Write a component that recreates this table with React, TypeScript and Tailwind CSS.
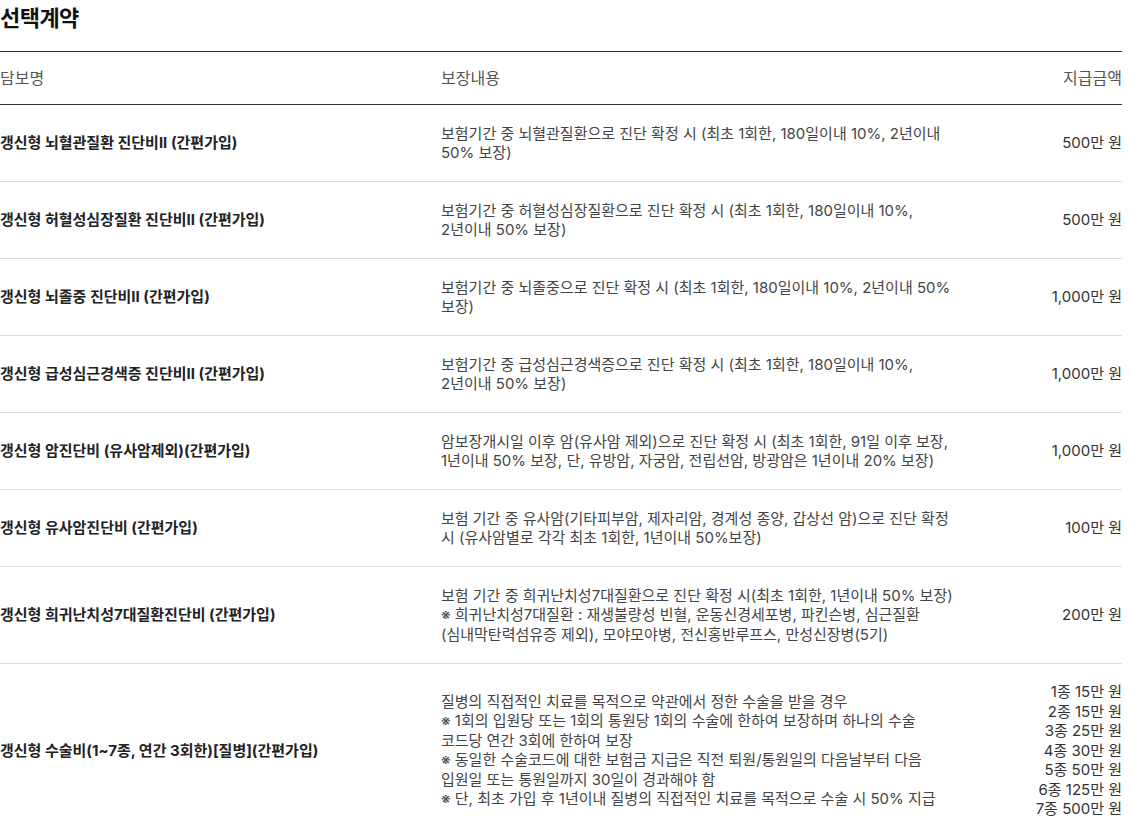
import React from 'react';

type Row = {
  name: string;
  desc: string[];
  amount: string[];
};

const rows: Row[] = [
  {
    name: '갱신형 뇌혈관질환 진단비II (간편가입)',
    desc: ['보험기간 중 뇌혈관질환으로 진단 확정 시 (최초 1회한, 180일이내 10%, 2년이내', '50% 보장)'],
    amount: ['500만 원'],
  },
  {
    name: '갱신형 허혈성심장질환 진단비II (간편가입)',
    desc: ['보험기간 중 허혈성심장질환으로 진단 확정 시 (최초 1회한, 180일이내 10%,', '2년이내 50% 보장)'],
    amount: ['500만 원'],
  },
  {
    name: '갱신형 뇌졸중 진단비II (간편가입)',
    desc: ['보험기간 중 뇌졸중으로 진단 확정 시 (최초 1회한, 180일이내 10%, 2년이내 50%', '보장)'],
    amount: ['1,000만 원'],
  },
  {
    name: '갱신형 급성심근경색증 진단비II (간편가입)',
    desc: ['보험기간 중 급성심근경색증으로 진단 확정 시 (최초 1회한, 180일이내 10%,', '2년이내 50% 보장)'],
    amount: ['1,000만 원'],
  },
  {
    name: '갱신형 암진단비 (유사암제외)(간편가입)',
    desc: [
      '암보장개시일 이후 암(유사암 제외)으로 진단 확정 시 (최초 1회한, 91일 이후 보장,',
      '1년이내 50% 보장, 단, 유방암, 자궁암, 전립선암, 방광암은 1년이내 20% 보장)',
    ],
    amount: ['1,000만 원'],
  },
  {
    name: '갱신형 유사암진단비 (간편가입)',
    desc: [
      '보험 기간 중 유사암(기타피부암, 제자리암, 경계성 종양, 갑상선 암)으로 진단 확정',
      '시 (유사암별로 각각 최초 1회한, 1년이내 50%보장)',
    ],
    amount: ['100만 원'],
  },
  {
    name: '갱신형 희귀난치성7대질환진단비 (간편가입)',
    desc: [
      '보험 기간 중 희귀난치성7대질환으로 진단 확정 시(최초 1회한, 1년이내 50% 보장)',
      '※ 희귀난치성7대질환 : 재생불량성 빈혈, 운동신경세포병, 파킨슨병, 심근질환',
      '(심내막탄력섬유증 제외), 모야모야병, 전신홍반루프스, 만성신장병(5기)',
    ],
    amount: ['200만 원'],
  },
  {
    name: '갱신형 수술비(1~7종, 연간 3회한)[질병](간편가입)',
    desc: [
      '질병의 직접적인 치료를 목적으로 약관에서 정한 수술을 받을 경우',
      '※ 1회의 입원당 또는 1회의 통원당 1회의 수술에 한하여 보장하며 하나의 수술',
      '코드당 연간 3회에 한하여 보장',
      '※ 동일한 수술코드에 대한 보험금 지급은 직전 퇴원/통원일의 다음날부터 다음',
      '입원일 또는 통원일까지 30일이 경과해야 함',
      '※ 단, 최초 가입 후 1년이내 질병의 직접적인 치료를 목적으로 수술 시 50% 지급',
    ],
    amount: ['1종 15만 원', '2종 15만 원', '3종 25만 원', '4종 30만 원', '5종 50만 원', '6종 125만 원', '7종 500만 원'],
  },
];

const App: React.FC = () => {
  return (
    <div className="w-[1122px] bg-white font-['Inter','Noto_Sans_CJK_KR',sans-serif] text-[#333]">
      <h2 className="h-9 leading-9 text-[22px] font-bold text-[#111] tracking-tight mb-[15px]">선택계약</h2>

      <div className="border-t border-[#333]">
        {/* header */}
        <div className="grid grid-cols-[441px_1fr_160px] border-b border-[#333] py-4 text-[16px] leading-5 text-[#555]">
          <div>담보명</div>
          <div>보장내용</div>
          <div className="text-right">지급금액</div>
        </div>

        {rows.map((row, i) => (
          <div
            key={i}
            className="grid grid-cols-[441px_1fr_160px] items-center border-b border-[#dddddd] py-[18.5px] text-[15px] leading-[19.5px]"
          >
            <div className="font-bold text-[#222]">{row.name}</div>
            <div className="text-[#444]">
              {row.desc.map((line, j) => (
                <div key={j} className="whitespace-nowrap">
                  {line}
                </div>
              ))}
            </div>
            <div className="text-right text-[#333]">
              {row.amount.map((a, j) => (
                <div key={j}>{a}</div>
              ))}
            </div>
          </div>
        ))}
      </div>
    </div>
  );
};

export default App;
